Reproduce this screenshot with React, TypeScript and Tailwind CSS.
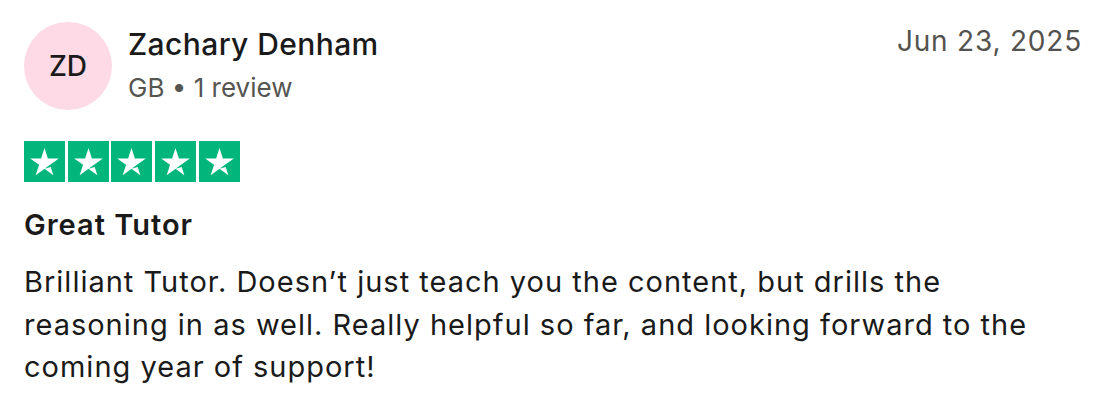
const Star = () => (
  <svg viewBox="0 0 46 46" className="w-[41px] h-[41px] block">
    <rect width="46" height="46" fill="#00b67a" />
    <path
      fill="#ffffff"
      d="M23 31.1l7-1.8 2.9 9L23 31.1zm16.1-11.6H26.8L23 7.9l-3.8 11.6H6.9l10 7.2-3.8 11.6 10-7.2 6.1-4.4 9.9-7.2z"
    />
  </svg>
);

export default function App() {
  return (
    <div
      className="w-[1100px] h-[420px] bg-white pl-6 pr-[18px] pt-[22px] text-[#1a1a1a]"
      style={{ fontFamily: "Inter, 'Helvetica Neue', Arial, sans-serif" }}
    >
      {/* Header */}
      <div className="flex items-start justify-between">
        <div className="flex items-start">
          <div className="w-[88px] h-[88px] rounded-full bg-[#fddae6] flex items-center justify-center text-[28px] font-medium">
            ZD
          </div>
          <div className="ml-4">
            <div className="mt-[4px] text-[30px] leading-[36px] font-medium tracking-[0.4px]">
              Zachary Denham
            </div>
            <div className="mt-[11px] text-[26px] leading-[30px] text-[#555551]">
              GB • 1 review
            </div>
          </div>
        </div>
        <div className="mt-[1px] text-[28px] leading-[36px] text-[#54524e] tracking-[0.8px]">
          Jun 23, 2025
        </div>
      </div>

      {/* Rating */}
      <div className="mt-[31px] flex gap-[2.7px]">
        <Star />
        <Star />
        <Star />
        <Star />
        <Star />
      </div>

      {/* Review */}
      <h2 className="mt-[25px] text-[29px] leading-[36px] font-semibold tracking-[1px]">
        Great Tutor
      </h2>
      <p className="mt-[18px] max-w-[1030px] text-[29px] leading-[42.5px] tracking-[1px]">
        Brilliant Tutor. Doesn’t just teach you the content, but drills the
        reasoning in as well. Really helpful so far, and looking forward to the
        coming year of support!
      </p>
    </div>
  );
}
